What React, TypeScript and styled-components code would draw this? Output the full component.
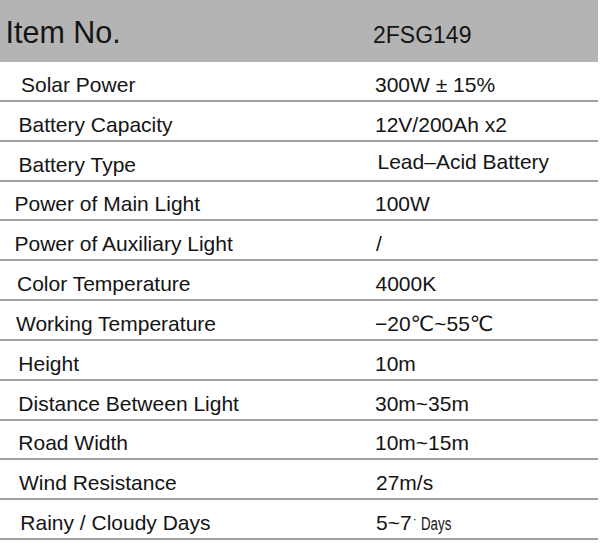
import React from "react";
import styled, { createGlobalStyle } from "styled-components";

const Global = createGlobalStyle`
  html, body { margin: 0; padding: 0; background: #ffffff; }
  body {
    font-family: "Liberation Sans", Arial, "DejaVu Sans", sans-serif;
    color: #141414;
  }
`;

const Table = styled.div`
  width: 598px;
  display: flex;
  flex-direction: column;
`;

const Header = styled.div`
  height: 62px;
  box-sizing: border-box;
  background: #b4b4b4;
  display: flex;
  align-items: flex-end;
  padding-bottom: 15px;
`;

const HeaderLabel = styled.div`
  width: 373px;
  box-sizing: border-box;
  padding-left: 5.5px;
  font-size: 30.5px;
  line-height: 30px;
  white-space: nowrap;
`;

const HeaderValue = styled.div`
  font-size: 23px;
  line-height: 23px;
  white-space: nowrap;
`;

const Row = styled.div`
  height: 39.85px;
  box-sizing: border-box;
  border-bottom: 2px solid #a1a1a1;
  display: grid;
  grid-template-columns: 375px 1fr;
  align-items: end;
  padding-bottom: 5px;
  font-size: 21px;
  line-height: 21px;
`;

const Label = styled.div<{ $indent: number }>`
  padding-left: ${(p) => p.$indent}px;
  white-space: nowrap;
`;

const Value = styled.div<{ $indent: number; $lift: number }>`
  padding-left: ${(p) => p.$indent}px;
  margin-bottom: ${(p) => p.$lift}px;
  white-space: nowrap;
`;

const Dot = styled.span`
  font-size: 12px;
  vertical-align: 7px;
  margin-left: 1px;
`;

const Small = styled.span`
  display: inline-block;
  font-size: 17.5px;
  line-height: 17px;
  margin-left: 4px;
  transform: scaleX(0.76);
  transform-origin: left bottom;
`;

type Spec = {
  label: string;
  value: React.ReactNode;
  li: number;
  vi: number;
  lift?: number;
};

const rows: Spec[] = [
  { label: "Solar Power", value: "300W ± 15%", li: 21, vi: 0 },
  { label: "Battery Capacity", value: "12V/200Ah x2", li: 18.5, vi: 0 },
  { label: "Battery Type", value: "Lead–Acid Battery", li: 18.5, vi: 2.5, lift: 3 },
  { label: "Power of Main Light", value: "100W", li: 14.5, vi: 0 },
  { label: "Power of Auxiliary Light", value: "/", li: 14.5, vi: 1 },
  { label: "Color Temperature", value: "4000K", li: 17, vi: 0.5 },
  { label: "Working Temperature", value: "−20℃~55℃", li: 16, vi: 0 },
  { label: "Height", value: "10m", li: 18.3, vi: 0 },
  { label: "Distance Between Light", value: "30m~35m", li: 18.3, vi: 0 },
  { label: "Road Width", value: "10m~15m", li: 18.3, vi: 0 },
  { label: "Wind Resistance", value: "27m/s", li: 19, vi: 1 },
  {
    label: "Rainy / Cloudy Days",
    value: (
      <>
        5~7<Dot>·</Dot>
        <Small>Days</Small>
      </>
    ),
    li: 20.3,
    vi: 1,
  },
];

export default function App() {
  return (
    <>
      <Global />
      <Table>
        <Header>
          <HeaderLabel>Item No.</HeaderLabel>
          <HeaderValue>2FSG149</HeaderValue>
        </Header>
        {rows.map((r) => (
          <Row key={r.label}>
            <Label $indent={r.li}>{r.label}</Label>
            <Value $indent={r.vi} $lift={r.lift ?? 0}>
              {r.value}
            </Value>
          </Row>
        ))}
      </Table>
    </>
  );
}
